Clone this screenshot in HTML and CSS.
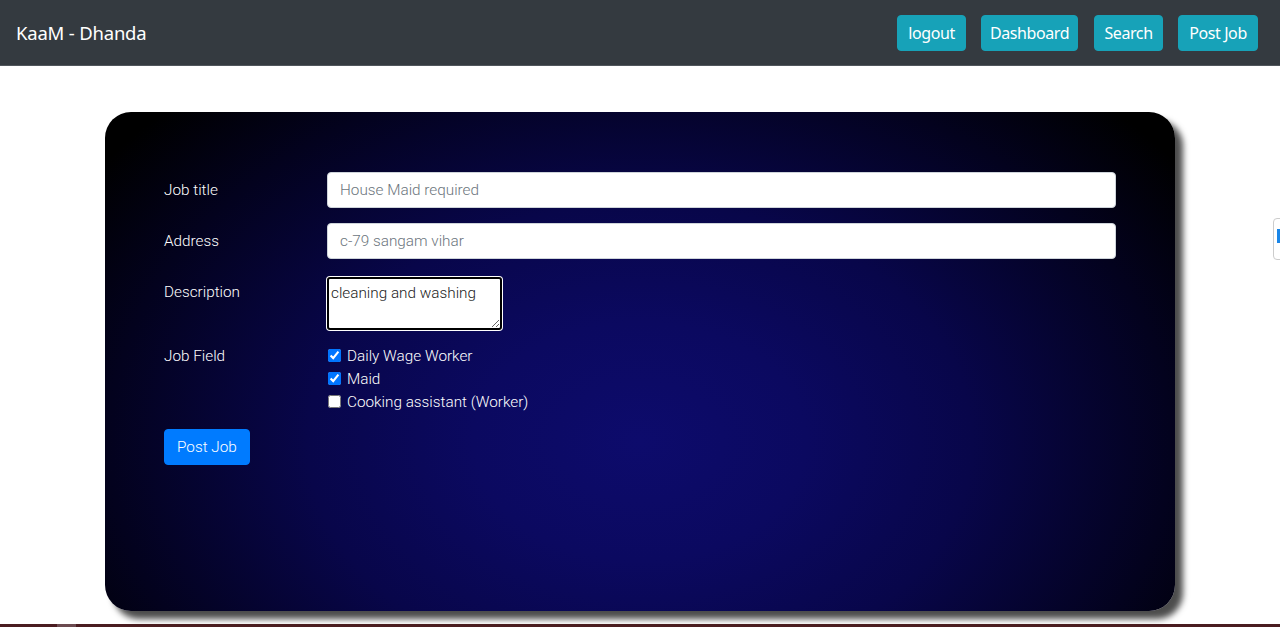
FILE: index.html
```html
<!DOCTYPE html>
<html>
<head>
<meta charset="utf-8">
<link rel="stylesheet" href="styles.css">
</head>
<body>
<nav class="navbar">
  <span class="brand">KaaM - Dhanda</span>
  <div class="nav-buttons">
    <button class="nbtn nbtn-logout">logout</button>
    <button class="nbtn nbtn-dash">Dashboard</button>
    <button class="nbtn nbtn-search">Search</button>
    <button class="nbtn nbtn-post">Post Job</button>
  </div>
</nav>
<main class="main">
  <div class="card">
    <form class="form">
      <div class="row">
        <label class="label">Job title</label>
        <input class="input" type="text" placeholder="House Maid required">
      </div>
      <div class="row">
        <label class="label">Address</label>
        <input class="input" type="text" placeholder="c-79 sangam vihar">
      </div>
      <div class="row row-ta">
        <label class="label">Description</label>
        <textarea class="ta">cleaning and washing</textarea>
      </div>
      <div class="row row-cb">
        <label class="label">Job Field</label>
        <div class="checks">
          <label class="check"><input type="checkbox" checked> Daily Wage Worker</label>
          <label class="check"><input type="checkbox" checked> Maid</label>
          <label class="check"><input type="checkbox"> Cooking assistant (Worker)</label>
        </div>
      </div>
      <button type="button" class="submit">Post Job</button>
    </form>
  </div>
  <div class="side-widget"><span class="side-inner"></span></div>
</main>
<div class="bottom-strip"><span class="strip-spot"></span></div>
</body>
</html>
```
FILE: styles.css
```css
* { box-sizing: border-box; }
html, body { margin: 0; padding: 0; }
body {
  width: 1280px;
  height: 627px;
  overflow: hidden;
  background: #fff;
  font-family: Roboto, "Liberation Sans", sans-serif;
  font-weight: 300;
  position: relative;
}
.navbar {
  height: 66px;
  background: #343a40;
  border-bottom: 1px solid #50565c;
  display: flex;
  align-items: center;
  justify-content: space-between;
  padding: 0 22px 0 16px;
}
.brand {
  color: #fff;
  font-family: "Noto Sans", "Open Sans", sans-serif;
  font-weight: 400;
  font-size: 18.5px;
  letter-spacing: -0.2px;
}
.nav-buttons { display: flex; gap: 15px; }
.nbtn {
  background: #17a2b8;
  border: 1px solid #17a2b8;
  color: #fff;
  font-family: "Noto Sans", "Open Sans", sans-serif;
  font-weight: 400;
  font-size: 16px;
  height: 36px;
  padding: 0;
  border-radius: 4px;
  letter-spacing: -0.4px;
  text-align: center;
}
.nbtn-logout { width: 69px; }
.nbtn-dash { width: 97px; margin-right: 1px; }
.nbtn-search { width: 69px; }
.nbtn-post { width: 80px; }
.main {
  position: relative;
  padding: 46px 0 0 105px;
}
.card {
  width: 1070px;
  height: 499px;
  border-radius: 26px;
  background: radial-gradient(ellipse 62% 95% at 50% 66%, #0d0b6c 0%, #0b0960 25%, #08064a 50%, #03021e 80%, #000000 100%);
  box-shadow: 8px 8px 6px rgba(0,0,0,0.7);
  padding: 60px 59px;
}
.form { display: flex; flex-direction: column; }
.row {
  display: flex;
  align-items: center;
  margin-bottom: 15px;
}
.row-ta { align-items: flex-start; margin-bottom: 14px; margin-top: 3px; }
.row-ta .label { margin-top: 6px; }
.row-cb { align-items: flex-start; margin-bottom: 16px; }
.row-cb .label { margin-top: 3px; }
.label {
  width: 163px;
  flex: none;
  color: #fff;
  font-size: 15.3px;
}
.input {
  flex: 1;
  height: 36px;
  border: 1px solid #ced4da;
  border-radius: 4px;
  padding: 0 12px;
  font-family: Roboto, sans-serif;
  font-weight: 300;
  font-size: 15.3px;
  color: #495057;
  background: #fff;
}
.input::placeholder { color: #6c757d; opacity: 1; }
.ta {
  width: 175px;
  height: 53px;
  border: 2px solid #000;
  border-radius: 3px;
  box-shadow: 0 0 0 1px #fff;
  font-family: Roboto, sans-serif;
  font-weight: 300;
  font-size: 15.3px;
  color: #222;
  padding: 5px 1px 3px 2px;
  resize: both;
}
.checks { display: flex; flex-direction: column; }
.check {
  color: #fff;
  font-size: 15.3px;
  height: 23px;
  display: flex;
  align-items: center;
  gap: 6px;
}
.check input {
  width: 13px;
  height: 13px;
  margin: 0 0 0 1px;
}
.submit {
  align-self: flex-start;
  background: #007bff;
  border: 1px solid #007bff;
  color: #fff;
  border-radius: 4px;
  height: 36px;
  padding: 0 12px;
  font-family: Roboto, sans-serif;
  font-weight: 300;
  font-size: 15.3px;
}
.side-widget {
  position: absolute;
  left: 1273px;
  top: 152px;
  width: 20px;
  height: 42px;
  border: 1px solid #ccc;
  border-radius: 4px;
  background: #fff;
}
.side-inner {
  position: absolute;
  left: 3px;
  top: 10px;
  width: 10px;
  height: 14px;
  background: #1a86e8;
}
.bottom-strip {
  position: absolute;
  left: 0;
  bottom: 0;
  width: 1280px;
  height: 3px;
  background: #4a1c20;
}
.strip-spot {
  position: absolute;
  left: 57px;
  top: 0;
  width: 19px;
  height: 3px;
  background: #6b4a4f;
}
```
